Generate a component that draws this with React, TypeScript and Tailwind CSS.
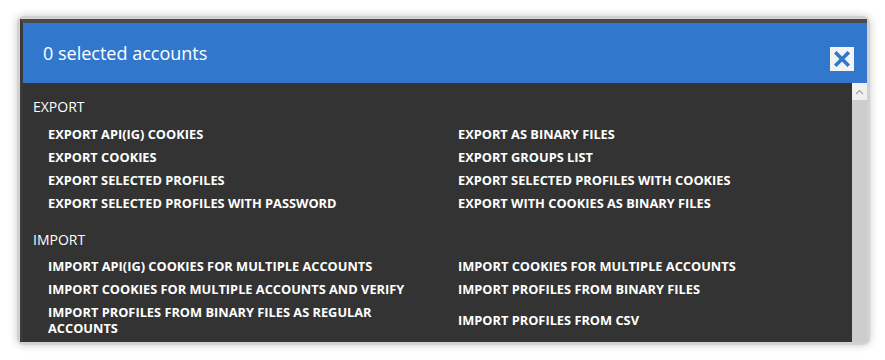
import React from "react";

const exportLeft = [
  "EXPORT API(IG) COOKIES",
  "EXPORT COOKIES",
  "EXPORT SELECTED PROFILES",
  "EXPORT SELECTED PROFILES WITH PASSWORD",
];
const exportRight = [
  "EXPORT AS BINARY FILES",
  "EXPORT GROUPS LIST",
  "EXPORT SELECTED PROFILES WITH COOKIES",
  "EXPORT WITH COOKIES AS BINARY FILES",
];

function Item({ children }: { children: React.ReactNode }) {
  return (
    <div className="flex items-center py-[3.65px] pl-[25px] pr-[20px] text-[12.8px] font-bold leading-[16px] text-white">
      <span>{children}</span>
    </div>
  );
}

export default function App() {
  return (
    <div
      className="h-[360px] w-[885px] bg-white pl-[17px] pt-[16px]"
      style={{ fontFamily: '"Open Sans", "Noto Sans", sans-serif' }}
    >
      <div className="h-[329px] w-[853px] rounded-[7px] bg-[#d2d2d2] px-[3px] pb-[3px] pt-[3px] shadow-[0_0_8px_rgba(0,0,0,0.22)]">
        <div className="flex h-full w-full flex-col border-l-[3px] border-t-[4px] border-l-[#3a3a3a] border-t-[#4a4a4a] bg-[#333333]">
          <div className="flex h-[60px] shrink-0 items-center justify-between bg-[#3178cd] pl-[20px] pr-[13px]">
            <span className="text-[18px] leading-none text-white">0 selected accounts</span>
            <div className="mt-[12px] flex h-[24px] w-[24px] items-center justify-center bg-[#f3f3f3]">
              <svg width="16" height="16" viewBox="0 0 16 16">
                <path d="M2.5 2.5 L13.5 13.5 M13.5 2.5 L2.5 13.5" stroke="#2f78cc" strokeWidth="3.6" strokeLinecap="square" />
              </svg>
            </div>
          </div>
          <div className="flex min-h-0 flex-1">
            <div className="flex-1 overflow-hidden pt-[14px]">
              <div className="pl-[10px] text-[14px] leading-[19px] text-white">EXPORT</div>
              <div className="mt-[6px] grid grid-cols-[410px_1fr]">
                {exportLeft.map((t, i) => (
                  <React.Fragment key={t}>
                    <Item>{t}</Item>
                    <Item>{exportRight[i]}</Item>
                  </React.Fragment>
                ))}
              </div>
              <div className="mt-[15px] pl-[10px] text-[14px] leading-[19px] text-white">IMPORT</div>
              <div className="mt-[5px] grid grid-cols-[410px_1fr]">
                <Item>IMPORT API(IG) COOKIES FOR MULTIPLE ACCOUNTS</Item>
                <Item>IMPORT COOKIES FOR MULTIPLE ACCOUNTS</Item>
                <Item>IMPORT COOKIES FOR MULTIPLE ACCOUNTS AND VERIFY</Item>
                <Item>IMPORT PROFILES FROM BINARY FILES</Item>
                <Item>IMPORT PROFILES FROM BINARY FILES AS REGULAR ACCOUNTS</Item>
                <Item>IMPORT PROFILES FROM CSV</Item>
              </div>
            </div>
            <div className="flex w-[15px] shrink-0 flex-col bg-[#cdcdcd]">
              <div className="flex h-[17px] items-center justify-center bg-[#f0f0f0]">
                <svg width="9" height="6" viewBox="0 0 9 6">
                  <path d="M1 5 L4.5 1.5 L8 5" stroke="#a0a0a0" strokeWidth="1.2" fill="none" />
                </svg>
              </div>
            </div>
          </div>
        </div>
      </div>
    </div>
  );
}
